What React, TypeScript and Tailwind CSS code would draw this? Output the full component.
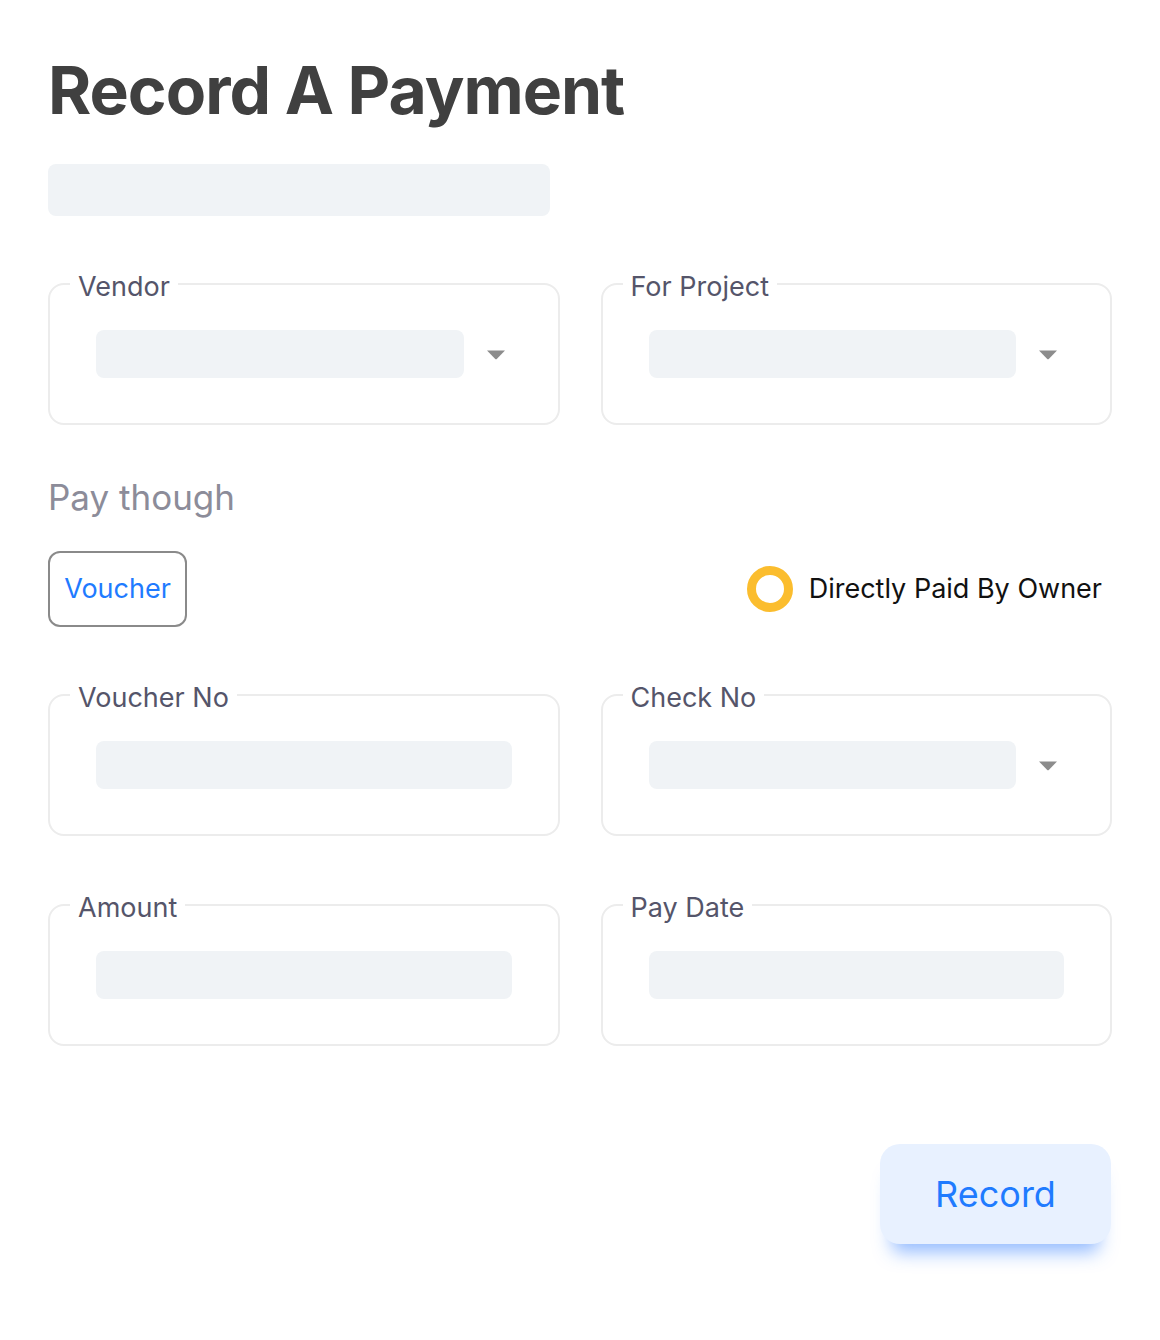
import React from 'react'

const FONT = { fontFamily: 'Inter, "Noto Sans", "Liberation Sans", sans-serif' }

function Caret() {
  return (
    <svg width="20" height="11" viewBox="0 0 20 11" className="ml-[22px] mr-[6px] shrink-0">
      <path d="M1 1.5h18l-8 8.2a1.4 1.4 0 0 1-2 0z" fill="#8c8c8c" />
    </svg>
  )
}

function Field({ label, select = false }: { label: string; select?: boolean }) {
  return (
    <fieldset className="rounded-2xl border-2 border-[#ececec] px-5 pb-[45px] pt-[27px]">
      <legend className="px-2 pt-[6px] text-[27px] leading-[32px] text-[#55556a]">{label}</legend>
      <div className="flex items-center px-[26px]">
        <div className="h-12 flex-1 rounded-lg bg-[#f0f3f6]" />
        {select && <Caret />}
      </div>
    </fieldset>
  )
}

export default function App() {
  return (
    <div className="min-h-screen bg-white px-12 pt-[50px]" style={FONT}>
      <h1 className="text-[66px] font-bold leading-[80px] tracking-[-1px] text-[#404040]">
        Record A Payment
      </h1>

      <div className="mt-[34px] h-[52px] w-[502px] rounded-lg bg-[#f0f3f6]" />

      <div className="mt-[49px] grid grid-cols-2 gap-x-[41px]">
        <Field label="Vendor" select />
        <Field label="For Project" select />
      </div>

      <p className="mt-[52px] text-[35px] leading-[40px] text-[#8c8c99]">Pay though</p>

      <div className="mt-[34px] flex items-center justify-between pr-[10px]">
        <button className="flex h-[76px] w-[139px] items-center justify-center rounded-xl border-2 border-[#8a8a8a] text-[27px] text-[#1f7bff]">
          Voucher
        </button>
        <label className="flex items-center gap-4">
          <span className="h-[46px] w-[46px] rounded-full border-[9px] border-[#fbbd2e] bg-white" />
          <span className="text-[27px] text-[#111111]">Directly Paid By Owner</span>
        </label>
      </div>

      <div className="mt-[49px] grid grid-cols-2 gap-x-[41px]">
        <Field label="Voucher No" />
        <Field label="Check No" select />
      </div>

      <div className="mt-[50px] grid grid-cols-2 gap-x-[41px]">
        <Field label="Amount" />
        <Field label="Pay Date" />
      </div>

      <div className="mt-[98px] flex justify-end pr-[1px]">
        <button className="h-[100px] w-[231px] rounded-[20px] bg-[#e8f1ff] text-[36px] text-[#1f7bff] shadow-[0_20px_18px_-12px_rgba(40,120,255,0.5)]">
          Record
        </button>
      </div>
    </div>
  )
}
